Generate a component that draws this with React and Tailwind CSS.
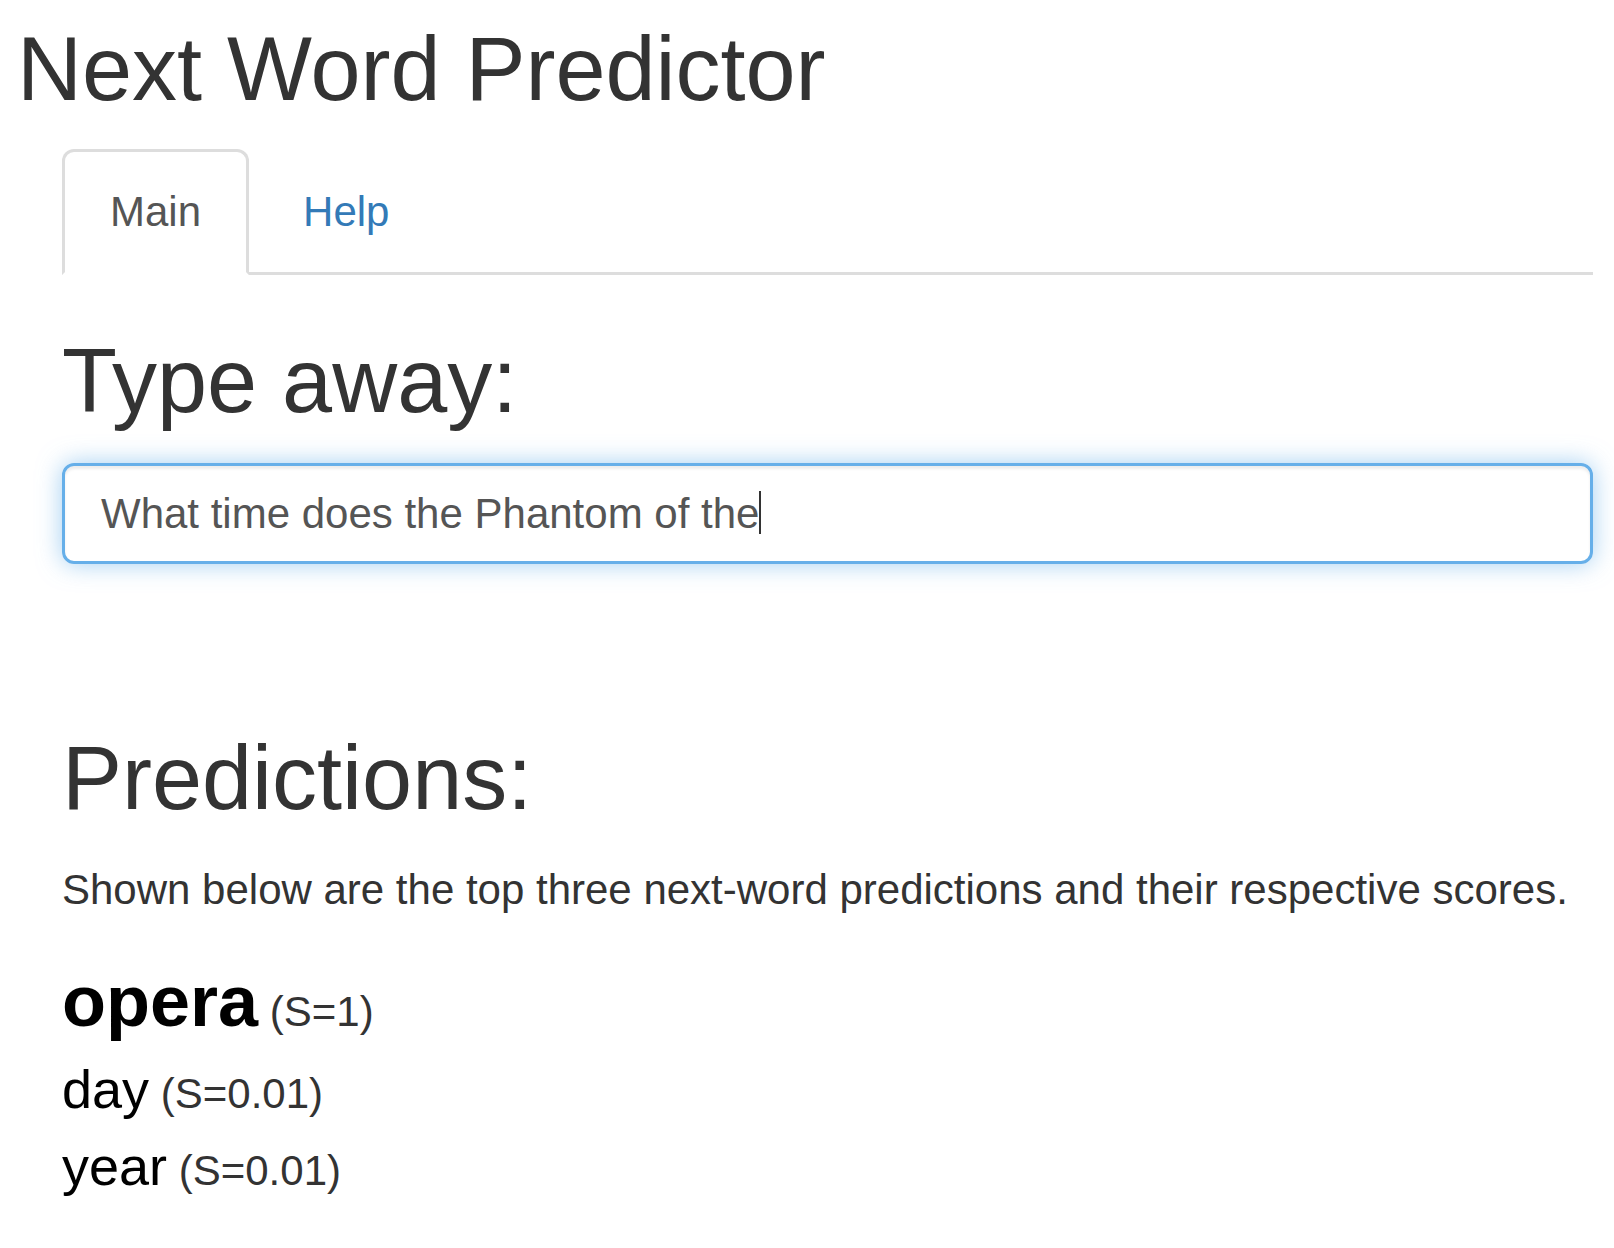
export default function App() {
  const predictions = [
    { word: 'opera', score: '1', top: true },
    { word: 'day', score: '0.01' },
    { word: 'year', score: '0.01' },
  ]

  return (
    <div className="min-h-screen bg-white font-['Liberation_Sans',Arial,sans-serif] text-[#333]">
      {/* Title */}
      <h1 className="pt-[20px] pl-[17px] text-[90px] leading-[99px] font-normal">Next Word Predictor</h1>

      <div className="pl-[62px] pr-[21px] mt-[30px]">
        {/* Tabs */}
        <ul className="flex border-b-[3px] border-[#ddd]">
          <li className="mr-[6px] -mb-[3px]">
            <span className="block px-[45px] py-[30px] text-[42px] leading-[60px] text-[#555] bg-white border-[3px] border-[#ddd] border-b-transparent rounded-t-[12px]">
              Main
            </span>
          </li>
          <li className="-mb-[3px]">
            <span className="block px-[45px] py-[30px] text-[42px] leading-[60px] text-[#337ab7] border-[3px] border-transparent rounded-t-[12px]">
              Help
            </span>
          </li>
        </ul>

        {/* Main tab */}
        <h2 className="mt-[57px] text-[90px] leading-[99px] font-normal">Type away:</h2>
        <div className="mt-[32px] h-[101px] px-[36px] py-[18px] border-[3px] border-[#66afe9] rounded-[12px] shadow-[inset_0_3px_3px_rgba(0,0,0,0.075),0_0_24px_rgba(102,175,233,0.6)] text-[42px] leading-[60px] text-[#555] whitespace-nowrap">
          What time does the Phantom of the
          <span className="inline-block w-[2px] h-[43px] bg-[#333] align-[-6px]"></span>
        </div>

        <h2 className="mt-[165px] text-[90px] leading-[99px] font-normal">Predictions:</h2>
        <p className="mt-[32px] text-[42px] leading-[60px]">
          Shown below are the top three next-word predictions and their respective scores.
        </p>

        <div className="mt-[31px] text-black">
          {predictions.map((p) =>
            p.top ? (
              <div key={p.word} className="text-[72px] leading-[100px] font-bold">
                {p.word}
                <span className="text-[42px] leading-none font-normal text-[#333]"> (S={p.score})</span>
              </div>
            ) : (
              <div key={p.word} className="text-[54px] leading-[77px]">
                {p.word}
                <span className="text-[42px] leading-none text-[#333]"> (S={p.score})</span>
              </div>
            )
          )}
        </div>
      </div>
    </div>
  )
}
